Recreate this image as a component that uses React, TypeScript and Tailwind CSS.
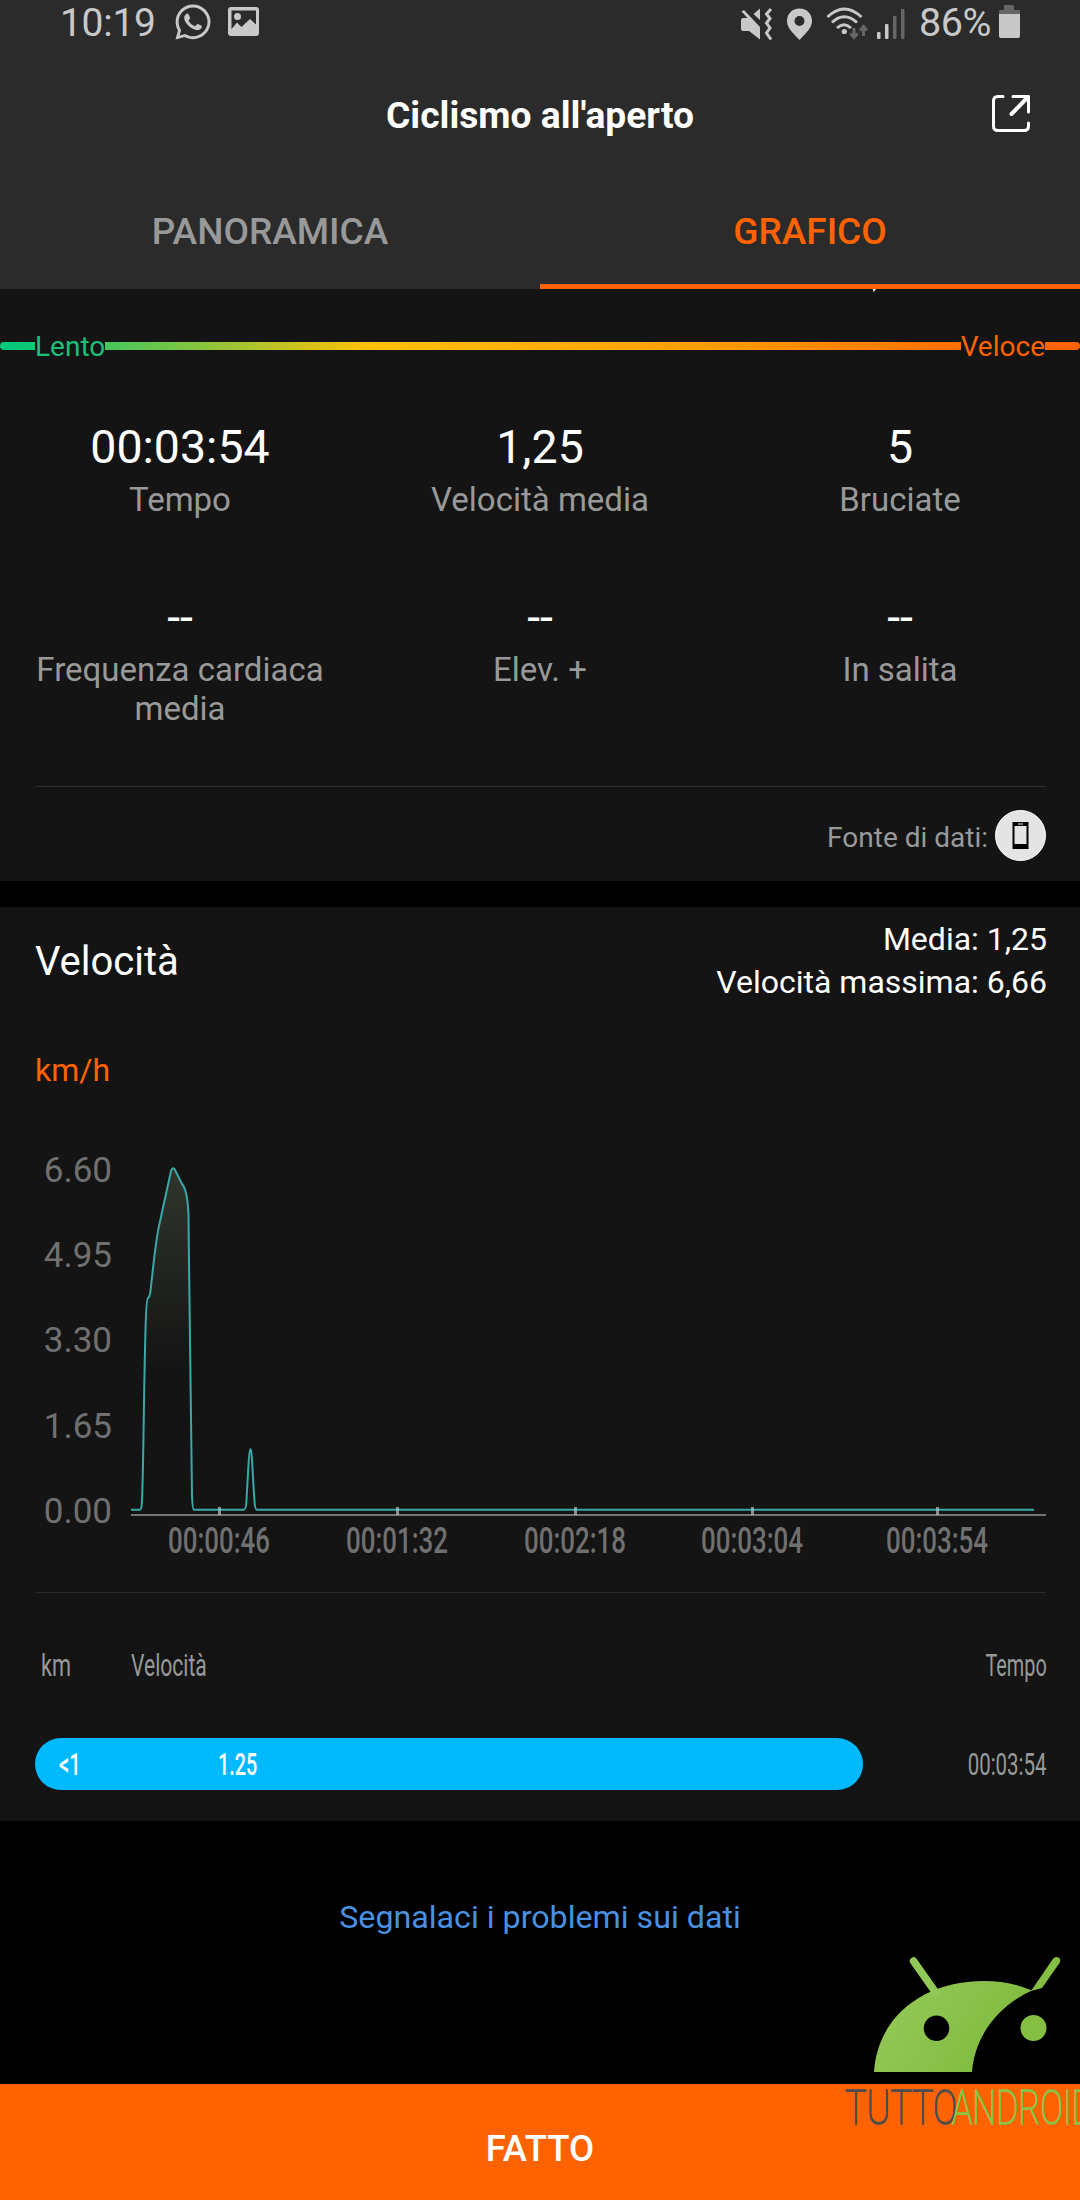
import { FaWhatsapp } from 'react-icons/fa'
import { clsx } from 'clsx'

const STATS = [
  { value: '00:03:54', label: 'Tempo' },
  { value: '1,25', label: 'Velocità media' },
  { value: '5', label: 'Bruciate' },
  { value: '--', label: 'Frequenza cardiaca media' },
  { value: '--', label: 'Elev. +' },
  { value: '--', label: 'In salita' },
]

const Y_LABELS = ['6.60', '4.95', '3.30', '1.65', '0.00']

const X_LABELS = [
  { x: 219, text: '00:00:46' },
  { x: 397, text: '00:01:32' },
  { x: 575, text: '00:02:18' },
  { x: 752, text: '00:03:04' },
  { x: 937, text: '00:03:54' },
]

const CURVE =
  'M131 1509.7H140Q141.3 1509.7 141.7 1505C143.5 1480 143.5 1400 145.5 1330Q146.3 1299 148 1298Q149.5 1297.5 150.5 1291C153 1270 155 1245 159 1226L171 1171Q173 1166 175 1170L182 1184Q187.5 1190 188.5 1215C189.5 1320 190.5 1430 192 1495Q192.5 1509.7 194 1509.7H244Q246 1509.7 246.5 1500C248 1475 249 1449 250.5 1449C252 1449 252.5 1475 254.5 1501Q255 1509.7 257 1509.7H1034'

function StatusBar() {
  return (
    <div className="flex h-[46px] items-center justify-between px-[60px] text-[#c8c8c8]">
      <div className="flex items-center">
        <span className="w-[115px] text-[39px] leading-[46px] tracking-[-0.3px]">10:19</span>
        <FaWhatsapp className="-mt-[2px] -ml-[2px] size-[40px]" />
        <svg className="-mt-[3px] ml-[15px]" width="32" height="30" viewBox="0 0 32 30" fill="currentColor">
          <path fillRule="evenodd" d="M3 0H28Q31 0 31 3V26Q31 29 28 29H3Q0 29 0 26V3Q0 0 3 0ZM3.5 3.5V22L9 15.5L13.5 20L22 12L28 17.5V3.5Z" />
          <circle cx="9.5" cy="9.5" r="3.5" />
        </svg>
      </div>
      <div className="flex items-center">
        <svg width="166" height="40" viewBox="739 0 166 40" fill="currentColor">
          <path d="M741.5 8.5L744 7L760 24V36.5L749 28H743Q741 28 741 26V17Q741 15 743 15H747.5ZM753.5 11L760 5.5V17Z" />
          <path d="M771 6L766.5 11L770 15.5L766.5 20L770 25L766.5 30L771 36.5" fill="none" stroke="currentColor" strokeWidth="3" />
          <path fillRule="evenodd" d="M799.5 5.5C792 5.5 787 11 787 18C787 25 793 30 799.5 37C806 30 812 25 812 18C812 11 807 5.5 799.5 5.5ZM799.5 13A5 5 0 1 1 799.5 23A5 5 0 1 1 799.5 13Z" />
          <g fill="none" stroke="currentColor" strokeWidth="3">
            <path d="M827.5 14Q844 -2 861.5 14" />
            <path d="M832 19.5Q844 8 857 19.5" />
            <path d="M837 25Q844 18.5 851 25" />
          </g>
          <circle cx="844.3" cy="28.5" r="2.6" />
          <g fill="none" stroke="#666" strokeWidth="3">
            <path d="M854 25V34M850.5 30.5L854 34.5L857.5 30.5" />
            <path d="M863.5 33V24M860 27.5L863.5 23.5L867 27.5" />
          </g>
          <rect x="877" y="29" width="3.5" height="7" rx="1" />
          <rect x="885" y="21" width="3.5" height="15" rx="1" />
          <rect x="893" y="13" width="3.5" height="23" rx="1" fill="#666" />
          <rect x="901" y="6" width="3.5" height="30" rx="1" fill="#666" />
        </svg>
        <span className="ml-[14px] w-[75px] text-[39.5px] leading-[46px] tracking-[-0.5px]">86%</span>
        <svg className="-mt-[3px] ml-[5px]" width="21" height="34" viewBox="0 0 21 34">
          <path d="M5 5V1Q5 0 6 0H14Q15 0 15 1V5H20Q21 5 21 6V9H0V6Q0 5 1 5Z" fill="#666" />
          <path d="M0 9H21V31Q21 33 19 33H2Q0 33 0 31Z" fill="currentColor" />
        </svg>
      </div>
    </div>
  )
}

function Header() {
  return (
    <header className="h-[289px] bg-[#2b2b2b]">
      <StatusBar />
      <div className="relative flex h-[138px] items-center justify-center pb-px">
        <h1 className="text-[37.2px] font-bold leading-[46px] text-white">Ciclismo all'aperto</h1>
        <svg className="absolute right-[49px] top-[48px]" width="40" height="40" viewBox="0 0 40 40" fill="none" stroke="white" strokeWidth="3" strokeLinecap="round" strokeLinejoin="round">
          <path d="M12 2.5H7Q2.5 2.5 2.5 7V32Q2.5 36.5 7 36.5H33Q37.5 36.5 37.5 32V29" />
          <path d="M22 2.5H37.5V18" />
          <path d="M37 3L20.5 20" strokeWidth="4" />
        </svg>
      </div>
      <div className="grid h-[105px] grid-cols-2 text-[37px] font-medium">
        {['PANORAMICA', 'GRAFICO'].map((tab, i) => (
          <div
            key={tab}
            className={clsx(
              'flex items-center justify-center border-b-[5px]',
              i === 1 ? 'border-[#ff6200] text-[#ff6200]' : 'border-transparent text-[#999]',
            )}
          >
            <span className="pb-[5px]">{tab}</span>
          </div>
        ))}
      </div>
    </header>
  )
}

function SpeedScale() {
  return (
    <div className="relative flex h-[33px] items-center justify-between px-[35px] text-[28px] leading-[33px]">
      <div className="absolute inset-x-0 top-[12px] h-[8px] rounded-full bg-[linear-gradient(90deg,#00c97b_0%,#00c97b_1%,#ffc107_34%,#ff9e00_65%,#ff6200_96%)]" />
      <span className="relative bg-[#141414] text-[#1dbf78]">Lento</span>
      <span className="relative bg-[#141414] text-[#ff6200]">Veloce</span>
    </div>
  )
}

function Summary() {
  return (
    <section className="h-[592px] bg-[#141414]">
      <svg className="block h-[41px] w-full" viewBox="0 0 1080 41">
        <path d="M873 0H876L873.5 3Z" fill="white" />
      </svg>
      <SpeedScale />
      <div className="grid h-[423px] grid-cols-3 grid-rows-[170px_198px] pt-[56px] text-center">
        {STATS.map(({ value, label }) => (
          <div key={label} className="px-[30px]">
            <div className="text-[46.5px] leading-[56px] text-white">{value}</div>
            <div className="mt-[5px] text-[33px] leading-[39px] text-[#999]">{label}</div>
          </div>
        ))}
      </div>
      <div className="ml-[35px] mr-[34px] flex h-[95px] items-start justify-end border-t border-[#2e2e2e] pt-[23px]">
        <span className="mr-[7px] pt-[11px] text-[28px] leading-[33px] text-[#999]">Fonte di dati:</span>
        <svg width="51" height="51" viewBox="0 0 51 51">
          <circle cx="25.5" cy="25.5" r="25" fill="#e4e4e4" stroke="#fff" />
          <path fillRule="evenodd" fill="#000" d="M17.5 12H33.5V39H17.5ZM19.5 16V34H31.5V16ZM23 13.5V14.5H28V13.5Z" />
        </svg>
      </div>
    </section>
  )
}

function SpeedChart() {
  return (
    <div className="flex h-[442px]">
      <div className="w-[112px] text-right text-[35px] leading-[42px] text-[#707070]">
        {Y_LABELS.map((text) => (
          <div key={text} className="mb-[43.2px]">{text}</div>
        ))}
      </div>
      <svg className="shrink-0" width="968" height="430" viewBox="112 1150 968 430">
        <defs>
          <linearGradient id="fill" gradientUnits="userSpaceOnUse" x1="0" y1="1168" x2="0" y2="1370">
            <stop offset="0" stopColor="#2f352c" />
            <stop offset="1" stopColor="#141414" />
          </linearGradient>
        </defs>
        <path d={CURVE} fill="url(#fill)" />
        <path d="M131 1515H1046" stroke="#777275" strokeWidth="2" />
        <path d={CURVE} fill="none" stroke="#3aa8a8" strokeWidth="2" />
        {X_LABELS.map(({ x, text }) => (
          <g key={text}>
            <rect x={x - 1} y="1507" width="3" height="8" fill="#b4c4c4" fillOpacity="0.7" />
            <text x={x - 51} y="1553" textLength="102" lengthAdjust="spacingAndGlyphs" fontSize="37" fontWeight="500" fill="#707070">
              {text}
            </text>
          </g>
        ))}
      </svg>
    </div>
  )
}

function SplitTable() {
  return (
    <div className="ml-[35px] mr-[34px] h-[229px] border-t border-[#2a2a2a] pt-[55px] text-[31px] leading-[36px] text-[#999]">
      <div className="flex">
        <span className="w-[90px] pl-[6px]"><span className="inline-block origin-left scale-x-[0.7]">km</span></span>
        <span className="flex-1 pl-[6px]"><span className="inline-block origin-left scale-x-[0.68]">Velocità</span></span>
        <span className="-mr-px inline-block origin-right scale-x-[0.64]">Tempo</span>
      </div>
      <div className="mt-[54px] flex h-[52px] items-center justify-between">
        <div className="flex h-[52px] w-[828px] items-center rounded-full bg-[#00baff] pl-[24px] pt-px text-white">
          <span className="w-[159px]"><span className="inline-block origin-left scale-x-[0.65] font-medium">&lt;1</span></span>
          <span className="inline-block origin-left scale-x-[0.64] font-medium">1.25</span>
        </div>
        <span className="-mr-px inline-block origin-right scale-x-[0.66] pt-px">00:03:54</span>
      </div>
    </div>
  )
}

function Watermark() {
  return (
    <svg className="absolute right-0 top-[1930px]" width="260" height="210" viewBox="0 0 260 210">
      <defs>
        <linearGradient id="droid" x1="0" y1="0" x2="1" y2="0.4">
          <stop offset="0" stopColor="#97ca5b" />
          <stop offset="1" stopColor="#80bb3e" />
        </linearGradient>
      </defs>
      <path
        fill="url(#droid)"
        fillRule="evenodd"
        d="M54 142C58 85 105 51 164 51C181 51 197 54 212 60.5C180 75 155 104 152 142ZM116.5 85.5A12.7 12.7 0 1 0 116.5 111A12.7 12.7 0 1 0 116.5 85.5Z"
      />
      <path d="M93.5 31L116 63" stroke="#92c855" strokeWidth="7.5" strokeLinecap="round" />
      <path d="M211 61L232.5 29.5Q235 26 238.5 27.5Q241.5 29.5 239.5 33L222 58Z" fill="#85be44" />
      <circle cx="213.5" cy="98" r="13" fill="#84be43" />
      <g fontFamily="Roboto" fontWeight="100" fontSize="48" strokeWidth="1.5">
        <text x="25" y="193.5" textLength="112" lengthAdjust="spacingAndGlyphs" fill="#4d4d4d" stroke="#4d4d4d">TUTTO</text>
        <text x="132" y="193.5" textLength="142" lengthAdjust="spacingAndGlyphs" fill="#8bc34a" stroke="#8bc34a">ANDROID</text>
      </g>
    </svg>
  )
}

export default function App() {
  return (
    <main className="relative h-[2200px] w-[1080px] overflow-hidden bg-black font-[Roboto,sans-serif]">
      <Header />
      <Summary />
      <section className="mt-[26px] h-[914px] bg-[#141414] text-white">
        <div className="flex h-[134px] items-start justify-between pl-[35px] pr-[33px]">
          <h2 className="pt-[31px] text-[40px] leading-[48px]">Velocità</h2>
          <div className="pt-[11px] text-right text-[32px] leading-[43px]">
            <div>Media: 1,25</div>
            <div>Velocità massima: 6,66</div>
          </div>
        </div>
        <div className="h-[109px] pl-[35px] pt-[10px] text-[32px] leading-[38px] text-[#ff6200]">km/h</div>
        <SpeedChart />
        <SplitTable />
      </section>
      <div className="flex h-[263px] items-start justify-center pt-[77px] text-[32.2px] leading-[38px] text-[#4a90e2]">
        Segnalaci i problemi sui dati
      </div>
      <footer className="flex h-[116px] items-center justify-center bg-[#ff6200] pt-[14px] text-[36.5px] font-medium text-white">
        FATTO
      </footer>
      <Watermark />
    </main>
  )
}
